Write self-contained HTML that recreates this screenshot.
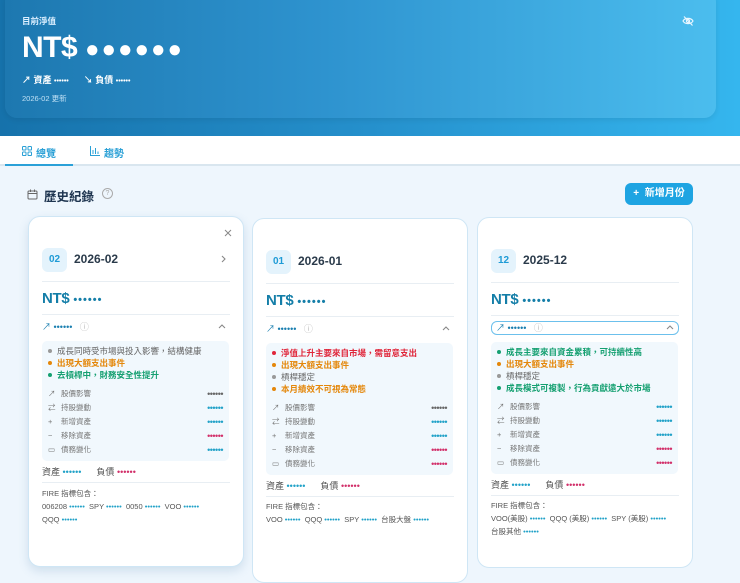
<!DOCTYPE html>
<html><head><meta charset="utf-8">
<style>
*{margin:0;padding:0;box-sizing:border-box}
body{width:740px;height:573px;overflow:hidden;background:#eef6fd;font-family:"Liberation Sans","Noto Sans CJK TC",sans-serif;position:relative;color:#333}
.hdr{position:absolute;left:0;top:0;width:740px;height:136px;background:linear-gradient(90deg,#1672ab 0%,#2590cc 50%,#35b6ee 100%)}
.panel{position:absolute;left:5px;top:-10px;width:711px;height:128px;border-radius:12px;background:linear-gradient(90deg,#1d78b0 0%,#2e93cf 45%,#4bbdee 100%);box-shadow:0 2px 6px rgba(0,0,0,.08)}
.abs{position:absolute;white-space:nowrap}
.tabs{position:absolute;left:0;top:136px;width:740px;height:30px;background:#fff;border-bottom:2px solid #d9e6ef}
.card{position:absolute;width:216px;background:#fff;border:1px solid #cfe6f5;border-radius:12px}
.badge{position:absolute;left:13px;top:31px;width:25px;height:24px;border-radius:6px;background:#e4f3fc;color:#1e9bd6;font-size:10px;font-weight:bold;text-align:center;line-height:24px}
.ttl{position:absolute;left:45px;top:35px;font-size:12px;color:#2a3a4a;font-weight:bold}
.hr{position:absolute;left:13px;right:13px;height:1px;background:#e8eef3}
.nt{position:absolute;left:13px;top:73px;font-size:15px;font-weight:bold;color:#147ea8;letter-spacing:-.3px}
.nt span{font-size:11px;letter-spacing:1px}
.tr{position:absolute;left:13px;right:13px;top:103px;height:16px;font-size:9px;color:#1a7fb0}
.chev{position:absolute;right:4px;top:4px}
.box{position:absolute;left:13px;right:14px;background:#f1f8fd;border-radius:5px;padding:4px 6px}
.b{font-size:8.5px;line-height:12px;white-space:nowrap}
.b i{display:inline-block;width:4px;height:4px;border-radius:50%;margin:0 5px 1px 0;vertical-align:middle}
.it{font-size:7.5px;line-height:14px;color:#777;display:flex;justify-content:space-between}
.it u{text-decoration:none;letter-spacing:-.5px;font-size:9px}
.ic{display:inline-block;width:10px;color:#777;margin-right:3px}
.g{color:#666}.g i{background:#999}
.o{color:#e4870a;font-weight:bold}.o i{background:#e4870a}
.gr{color:#15a071;font-weight:bold}.gr i{background:#15a071}
.r{color:#e0263a;font-weight:bold}.r i{background:#e0263a}
.t{color:#22a2c8}.p{color:#d2306a}.d{color:#666}
.al{position:absolute;left:13px;font-size:9px;color:#555}
.fire{position:absolute;left:13px;right:10px;font-size:7.5px;color:#555;line-height:13px}
</style></head><body>
<div class="hdr"><div class="panel"></div></div>
<div class="abs" style="left:22px;top:15px;font-size:8.5px;color:#dcefff;font-weight:bold">目前淨值</div>
<div class="abs" style="left:22px;top:31px;font-size:30px;font-weight:bold;color:#fff;letter-spacing:-.5px">NT$ <span style="font-size:24px;letter-spacing:2px">●●●●●●</span></div>
<div class="abs" style="left:22px;top:73px;font-size:9px;color:#fff;font-weight:bold">↗ 資產 <span style="font-size:7px">••••••</span>&nbsp;&nbsp;&nbsp;&nbsp;&nbsp;&nbsp;↘ 負債 <span style="font-size:7px">••••••</span></div>
<div class="abs" style="left:22px;top:93px;font-size:7.5px;color:#bfe0f5">2026-02 更新</div>
<svg class="abs" style="left:682px;top:15px" width="12" height="12" viewBox="0 0 12 12" fill="none" stroke="#e8f6ff" stroke-width="1.2"><path d="M1 6c2-3.5 8-3.5 10 0c-2 3.5-8 3.5-10 0z"/><circle cx="6" cy="6" r="1.6"/><path d="M2 1.5l8.5 9"/></svg>
<div class="tabs"></div>
<div class="abs" style="left:5px;top:164px;width:68px;height:2px;background:#2ba1d8"></div>
<svg class="abs" style="left:22px;top:146px" width="10" height="10" viewBox="0 0 10 10" fill="none" stroke="#2aa0d6" stroke-width="1"><rect x="0.5" y="0.5" width="3.5" height="3.5" rx=".8"/><rect x="6" y="0.5" width="3.5" height="3.5" rx=".8"/><rect x="0.5" y="6" width="3.5" height="3.5" rx=".8"/><rect x="6" y="6" width="3.5" height="3.5" rx=".8"/></svg>
<div class="abs" style="left:36px;top:145px;font-size:10px;color:#2aa0d6;font-weight:bold">總覽</div>
<svg class="abs" style="left:90px;top:146px" width="10" height="10" viewBox="0 0 10 10" fill="none" stroke="#2aa0d6" stroke-width="1"><path d="M.5 0v9.5H10M3 8V4M5.5 8V2M8 8V5.5"/></svg>
<div class="abs" style="left:104px;top:145px;font-size:10px;color:#2aa0d6;font-weight:bold">趨勢</div>
<svg class="abs" style="left:27px;top:189px" width="11" height="11" viewBox="0 0 11 11" fill="none" stroke="#666" stroke-width="1"><rect x="1" y="2" width="9" height="8" rx="1"/><path d="M1 4.5h9M3.5 0.5v2.5M7.5 0.5v2.5"/></svg>
<div class="abs" style="left:44px;top:186px;font-size:12.5px;color:#1e3550;font-weight:bold">歷史紀錄</div>
<div class="abs" style="left:102px;top:188px;width:11px;height:11px;border:1px solid #aaa;border-radius:50%;font-size:7px;color:#aaa;text-align:center;line-height:9px">?</div>
<div class="abs" style="left:625px;top:183px;width:68px;height:22px;border-radius:6px;background:#1ea4e2;color:#fff;font-size:10px;font-weight:bold;line-height:22px;text-align:center">+&nbsp; 新增月份</div>

<!-- card1 -->
<div class="card" style="left:28px;top:216px;height:351px;box-shadow:0 4px 10px rgba(80,130,170,.2)">
<svg class="abs" style="right:11px;top:12px" width="8" height="8" viewBox="0 0 8 8" stroke="#888" stroke-width="1"><path d="M1 1l6 6M7 1l-6 6"/></svg>
<div class="badge">02</div><div class="ttl">2026-02</div>
<svg class="abs" style="right:17px;top:38px" width="5" height="8" viewBox="0 0 5 8" fill="none" stroke="#888" stroke-width="1.1"><path d="M1 1l3 3-3 3"/></svg>
<div class="hr" style="top:64px"></div>
<div class="nt">NT$ <span>••••••</span></div>
<div class="hr" style="top:97px"></div>
<div class="tr">↗ ••••••&nbsp;&nbsp; <span style="color:#bbb">ⓘ</span><svg class="chev" width="8" height="5" viewBox="0 0 8 5" fill="none" stroke="#888" stroke-width="1.1"><path d="M1 4l3-3 3 3"/></svg></div>
<div class="box" style="top:124px">
<div class="b g"><i></i>成長同時受市場與投入影響，結構健康</div>
<div class="b o"><i></i>出現大額支出事件</div>
<div class="b gr" style="margin-bottom:6px"><i></i>去槓桿中，財務安全性提升</div>
<div class="it"><span><span class="ic">↗</span>股價影響</span><u class="d">••••••</u></div>
<div class="it"><span><span class="ic">⇄</span>持股變動</span><u class="t">••••••</u></div>
<div class="it"><span><span class="ic">+</span>新增資產</span><u class="t">••••••</u></div>
<div class="it"><span><span class="ic">−</span>移除資產</span><u class="p">••••••</u></div>
<div class="it"><span><span class="ic">▭</span>債務變化</span><u class="t">••••••</u></div>
</div>
<div class="al" style="top:248px">資產 <span class="t">••••••</span>&nbsp;&nbsp;&nbsp;&nbsp;&nbsp; 負債 <span class="p">••••••</span></div>
<div class="hr" style="top:265px"></div>
<div class="fire" style="top:270px">FIRE 指標包含：<br>006208 <span class="t">••••••</span>&nbsp; SPY <span class="t">••••••</span>&nbsp; 0050 <span class="t">••••••</span>&nbsp; VOO <span class="t">••••••</span><br>QQQ <span class="t">••••••</span></div>
</div>

<!-- card2 -->
<div class="card" style="left:252px;top:218px;height:365px">
<div class="badge">01</div><div class="ttl">2026-01</div>
<div class="hr" style="top:64px"></div>
<div class="nt">NT$ <span>••••••</span></div>
<div class="hr" style="top:97px"></div>
<div class="tr">↗ ••••••&nbsp;&nbsp; <span style="color:#bbb">ⓘ</span><svg class="chev" width="8" height="5" viewBox="0 0 8 5" fill="none" stroke="#888" stroke-width="1.1"><path d="M1 4l3-3 3 3"/></svg></div>
<div class="box" style="top:124px">
<div class="b r"><i></i>淨值上升主要來自市場，需留意支出</div>
<div class="b o"><i></i>出現大額支出事件</div>
<div class="b g"><i></i>槓桿穩定</div>
<div class="b o" style="margin-bottom:6px"><i></i>本月績效不可視為常態</div>
<div class="it"><span><span class="ic">↗</span>股價影響</span><u class="d">••••••</u></div>
<div class="it"><span><span class="ic">⇄</span>持股變動</span><u class="t">••••••</u></div>
<div class="it"><span><span class="ic">+</span>新增資產</span><u class="t">••••••</u></div>
<div class="it"><span><span class="ic">−</span>移除資產</span><u class="p">••••••</u></div>
<div class="it"><span><span class="ic">▭</span>債務變化</span><u class="p">••••••</u></div>
</div>
<div class="al" style="top:260px">資產 <span class="t">••••••</span>&nbsp;&nbsp;&nbsp;&nbsp;&nbsp; 負債 <span class="p">••••••</span></div>
<div class="hr" style="top:277px"></div>
<div class="fire" style="top:281px">FIRE 指標包含：<br>VOO <span class="t">••••••</span>&nbsp; QQQ <span class="t">••••••</span>&nbsp; SPY <span class="t">••••••</span>&nbsp; 台股大盤 <span class="t">••••••</span></div>
</div>

<!-- card3 -->
<div class="card" style="left:477px;top:217px;height:351px">
<div class="badge">12</div><div class="ttl">2025-12</div>
<div class="hr" style="top:64px"></div>
<div class="nt">NT$ <span>••••••</span></div>
<div class="hr" style="top:97px"></div>
<div class="tr" style="border:1px solid #6cc0ec;border-radius:6px;top:103px;left:13px;right:13px;height:14px;padding-left:4px;line-height:12px">↗ ••••••&nbsp;&nbsp; <span style="color:#bbb">ⓘ</span><svg class="chev" style="top:3px" width="8" height="5" viewBox="0 0 8 5" fill="none" stroke="#888" stroke-width="1.1"><path d="M1 4l3-3 3 3"/></svg></div>
<div class="box" style="top:124px">
<div class="b gr"><i></i>成長主要來自資金累積，可持續性高</div>
<div class="b o"><i></i>出現大額支出事件</div>
<div class="b g"><i></i>槓桿穩定</div>
<div class="b gr" style="margin-bottom:6px"><i></i>成長模式可複製，行為貢獻遠大於市場</div>
<div class="it"><span><span class="ic">↗</span>股價影響</span><u class="t">••••••</u></div>
<div class="it"><span><span class="ic">⇄</span>持股變動</span><u class="t">••••••</u></div>
<div class="it"><span><span class="ic">+</span>新增資產</span><u class="t">••••••</u></div>
<div class="it"><span><span class="ic">−</span>移除資產</span><u class="p">••••••</u></div>
<div class="it"><span><span class="ic">▭</span>債務變化</span><u class="p">••••••</u></div>
</div>
<div class="al" style="top:260px">資產 <span class="t">••••••</span>&nbsp;&nbsp;&nbsp;&nbsp;&nbsp; 負債 <span class="p">••••••</span></div>
<div class="hr" style="top:277px"></div>
<div class="fire" style="top:281px">FIRE 指標包含：<br>VOO(美股) <span class="t">••••••</span>&nbsp; QQQ (美股) <span class="t">••••••</span>&nbsp; SPY (美股) <span class="t">••••••</span><br>台股其他 <span class="t">••••••</span></div>
</div>
</body></html>
